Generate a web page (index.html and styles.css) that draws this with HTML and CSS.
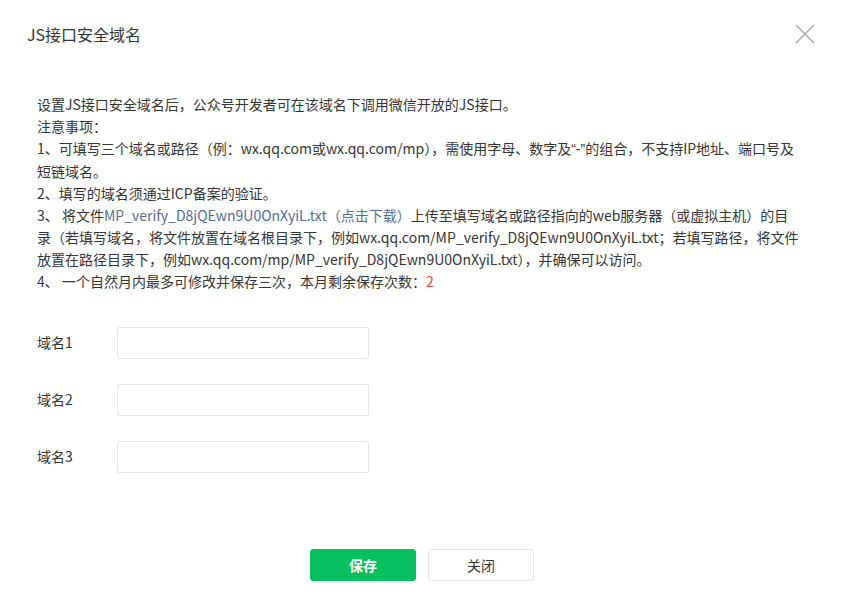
FILE: index.html
```html
<!DOCTYPE html>
<html lang="zh-CN">
<head>
<meta charset="utf-8">
<title>JS接口安全域名</title>
<link rel="stylesheet" href="styles.css">
</head>
<body>
<div class="dialog">
  <div class="header">
    <h3 class="title">JS接口安全域名</h3>
    <button class="close" aria-label="关闭">
      <svg width="20" height="20" viewBox="0 0 20 20"><path d="M1 1L19 19M19 1L1 19" stroke="#a3a3a3" stroke-width="1.3" fill="none"/></svg>
    </button>
  </div>
  <div class="content">
    <div class="notes">
      设置JS接口安全域名后，公众号开发者可在该域名下调用微信开放的JS接口。<br>
      注意事项：<br>
      1、可填写三个域名或路径（例：wx.qq.com或wx.qq.com/mp），需使用字母、数字及<span class="latin">“-”</span>的组合，不支持IP地址、端口号及<br>
      短链域名。<br>
      2、填写的域名须通过ICP备案的验证。<br>
      3、 将文件<a class="link" href="#">MP_verify_D8jQEwn9U0OnXyiL.txt（点击下载）</a>上传至填写域名或路径指向的web服务器（或虚拟主机）的目<br>
      录（若填写域名，将文件放置在域名根目录下，例如wx.qq.com/MP_verify_D8jQEwn9U0OnXyiL.txt；若填写路径，将文件<br>
      放置在路径目录下，例如wx.qq.com/mp/MP_verify_D8jQEwn9U0OnXyiL.txt），并确保可以访问。<br>
      4、 一个自然月内最多可修改并保存三次，本月剩余保存次数：<span class="count">2</span>
    </div>
    <div class="form">
      <div class="row"><label class="label">域名1</label><input class="input" type="text"></div>
      <div class="row"><label class="label">域名2</label><input class="input" type="text"></div>
      <div class="row"><label class="label">域名3</label><input class="input" type="text"></div>
    </div>
  </div>
  <div class="footer">
    <button class="btn btn-primary">保存</button>
    <button class="btn btn-default">关闭</button>
  </div>
</div>
</body>
</html>
```

FILE: styles.css
```css
html, body {
  margin: 0;
  padding: 0;
  background: #fff;
}
body {
  font-family: "Noto Sans CJK SC", "Microsoft YaHei", sans-serif;
  color: #353535;
}
.dialog {
  width: 842px;
}
.header {
  display: flex;
  align-items: center;
  justify-content: space-between;
  height: 68px;
  padding: 0 27px;
}
.title {
  margin: 0;
  font-size: 16px;
  font-weight: normal;
  color: #353535;
}
.close {
  border: 0;
  background: none;
  padding: 0;
  width: 20px;
  height: 20px;
  display: flex;
}
.content {
  padding: 25px 37px 0;
}
.notes {
  font-size: 14px;
  line-height: 22px;
  white-space: nowrap;
  color: #353535;
}
.latin {
  font-family: "Liberation Sans", sans-serif;
}
.link {
  color: #576b95;
  text-decoration: none;
}
.count {
  color: #e64340;
}
.form {
  margin-top: 35px;
  display: flex;
  flex-direction: column;
  gap: 25px;
}
.row {
  display: flex;
  align-items: center;
  height: 32px;
}
.label {
  width: 80px;
  font-size: 14px;
  line-height: 18px;
  padding-bottom: 3px;
  color: #353535;
}
.input {
  box-sizing: border-box;
  width: 252px;
  height: 32px;
  border: 1px solid #e4e4e4;
  border-radius: 2px;
  margin: 0;
  padding: 0 8px;
  outline: none;
}
.footer {
  margin-top: 76px;
  padding-left: 2px;
  display: flex;
  justify-content: center;
  gap: 12px;
}
.btn {
  box-sizing: border-box;
  width: 106px;
  height: 32px;
  font-family: "Noto Sans CJK SC", sans-serif;
  font-size: 14px;
  border-radius: 3px;
  cursor: pointer;
}
.btn-primary {
  background: #07c160;
  border: 1px solid #07c160;
  color: #fff;
  font-weight: bold;
}
.btn-default {
  background: #fff;
  border: 1px solid #e4e4e4;
  color: #353535;
}
```
